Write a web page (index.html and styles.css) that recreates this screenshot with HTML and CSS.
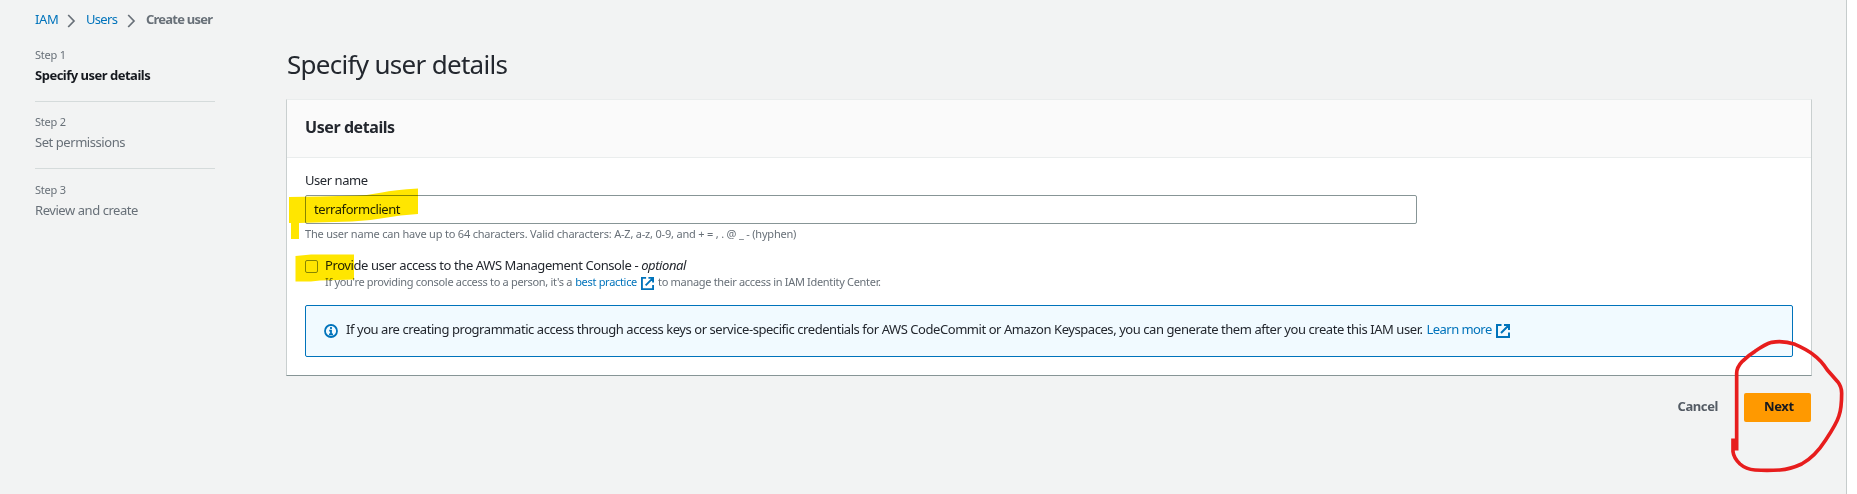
FILE: index.html
```html
<!DOCTYPE html>
<html lang="en">
<head>
<meta charset="utf-8">
<title>Create user | IAM</title>
<link rel="stylesheet" href="styles.css">
</head>
<body>
<div class="page">
  <nav class="breadcrumbs">
    <a class="link crumb-iam" href="#">IAM</a>
    <svg class="chevron" viewBox="0 0 9 14"><path d="M1.2 1 7 7l-5.8 6"/></svg>
    <a class="link crumb-users" href="#">Users</a>
    <svg class="chevron" viewBox="0 0 9 14"><path d="M1.2 1 7 7l-5.8 6"/></svg>
    <span class="crumb-current">Create user</span>
  </nav>
  <div class="layout">
    <ol class="steps">
      <li class="step active"><div class="step-label">Step 1</div><div class="step-title">Specify user details</div></li>
      <li class="step"><div class="step-label">Step 2</div><div class="step-title">Set permissions</div></li>
      <li class="step"><div class="step-label">Step 3</div><div class="step-title">Review and create</div></li>
    </ol>
    <main class="content">
      <h1 class="title">Specify user details</h1>
      <section class="card">
        <header class="card-header"><h2>User details</h2></header>
        <div class="card-body">
          <label class="field-label" for="name">User name</label>
          <input class="field" id="name" type="text" value="terraformclient" spellcheck="false">
          <p class="hint">The user name can have up to 64 characters. Valid characters: A-Z, a-z, 0-9, and + = , . @ _ - (hyphen)</p>
          <div class="check-row">
            <span class="checkbox"></span>
            <div>
              <div class="check-label">Provide user access to the AWS Management Console - <em>optional</em></div>
              <div class="check-hint"><span>If you're providing console access to a person, it's a</span><a class="link practice" href="#">best practice</a><svg class="external small" viewBox="0 0 14 14"><path d="M5.5 1H1v12h12V8.5M8 1h5v5M12.5 1.5 5 9"/></svg><span>to manage their access in IAM Identity Center.</span></div>
            </div>
          </div>
          <div class="alert">
            <svg class="info" viewBox="0 0 14 14"><circle cx="7" cy="7" r="6"/><path d="M7 3v2M5.2 6.6H7v3.2M5 10.3h4"/></svg>
            <span class="alert-text">If you are creating programmatic access through access keys or service-specific credentials for AWS CodeCommit or Amazon Keyspaces, you can generate them after you create this IAM user.</span>
            <a class="link learn" href="#">Learn more</a>
            <svg class="external" viewBox="0 0 14 14"><path d="M5.5 1H1v12h12V8.5M8 1h5v5M12.5 1.5 5 9"/></svg>
          </div>
        </div>
      </section>
      <div class="actions">
        <button class="btn cancel">Cancel</button>
        <button class="btn next">Next</button>
      </div>
    </main>
  </div>
</div>
<svg class="ink highlighter" viewBox="0 0 1857 494">
  <path d="M289 197 320 196.6 357 195.5Q370 195 382 192.500T418 188.500V214Q400 215 384 218T352 221.500L299 223V239H291V223H289Z"/>
  <path d="M295.500 256 311 254.500H354V279.500L320 280.500 311 281.500H295.500Z"/>
</svg>
<svg class="ink pen" viewBox="0 0 1857 494">
  <path transform="translate(1640 290) scale(.33333)" d="M290 476V250Q290 232 307 214Q325 196 345 184Q375 163 395 157Q430 151 465 163Q500 178 520 194Q543 210 562 240L593 275Q605 290 605 310Q605 355 597 377Q590 400 557 450Q525 500 485 522Q450 538 420 540Q380 542 345 540Q318 538 300 522Q281 504 279 485V451"/>
</svg>
</body>
</html>
```
FILE: styles.css
```css
* { box-sizing: border-box; }
body {
  margin: 0;
  height: 494px;
  overflow: hidden;
  background: #fff;
  color: #23272e;
  font: 13px/20px "Noto Sans", sans-serif;
  letter-spacing: -0.44px;
}
h1, h2, p, ol { margin: 0; padding: 0; }
svg { flex: none; fill: none; }
.page {
  width: 1847px;
  height: 494px;
  padding: 9px 34px 0 35px;
  background: #f2f3f3;
  border-right: 1px solid #c6cccc;
}
.link { color: #0073bb; text-decoration: none; }

.breadcrumbs { display: flex; align-items: center; height: 20px; white-space: nowrap; }
.crumb-iam { width: 32px; letter-spacing: -0.3px; }
.crumb-users { width: 31px; margin-left: 10px; letter-spacing: -0.7px; }
.chevron { width: 9px; height: 14px; margin-top: 4px; stroke: #687078; stroke-width: 1.7; }
.crumb-users + .chevron { margin-left: 10px; }
.crumb-current { margin-left: 10px; color: #687078; font-weight: 700; letter-spacing: -0.78px; }

.layout { display: flex; }
.steps { width: 180px; margin: 18px 71px 0 0; list-style: none; }
.step { padding-bottom: 16px; color: #687078; }
.step + .step { padding-top: 12px; border-top: 1px solid #d5dbdb; }
.step:last-child { padding-top: 13px; }
.step-label { margin-bottom: 2px; font-size: 11px; line-height: 16px; letter-spacing: -0.2px; }
.active .step-title { color: #16191f; font-weight: 700; letter-spacing: -0.5px; }

.content { width: 1526px; margin-top: 17px; }
.title { margin-bottom: 17px; padding-left: 1px; font-size: 26px; font-weight: 400; line-height: 36px; letter-spacing: -0.7px; }
.card {
  height: 277px;
  background: #fff;
  border: 1px solid #c9cfcf;
  border-top-color: #eaeded;
  border-bottom-color: #879596;
}
.card-header { height: 58px; padding: 16px 18px 0; background: #fafafa; border-bottom: 1px solid #eaeded; }
.card-header h2 { font-size: 16px; font-weight: 700; line-height: 22px; letter-spacing: -0.42px; }
.card-body { padding: 12px 18px 0 18px; }
.field-label { display: block; margin-bottom: 5px; }
.field {
  display: block;
  width: 1112px;
  height: 29px;
  padding: 0 8px 2px 8px;
  background: #fff;
  border: 1px solid #879596;
  border-radius: 2px;
  color: #23272e;
  font: inherit;
  letter-spacing: -0.44px;
  outline: 0;
}
.hint { margin-top: 2px; color: #687078; font-size: 11px; line-height: 16px; letter-spacing: -0.2px; }
.check-row { display: flex; gap: 7px; margin-top: 14px; }
.checkbox { width: 13px; height: 13px; margin-top: 4px; background: #fff; border: 1px solid #879596; border-radius: 2px; }
.check-label { line-height: 18px; letter-spacing: -0.41px; }
.check-hint { display: flex; color: #687078; font-size: 11px; line-height: 16px; letter-spacing: -0.31px; white-space: pre; }
.practice { margin-left: 3px; }
.external { width: 14px; height: 14px; stroke: #0073bb; stroke-width: 2; }
.external.small { width: 13px; height: 13px; margin: 3px 4px 0 4px; }
.alert {
  display: flex;
  height: 52px;
  margin-top: 15px;
  padding: 13px 18px;
  background: #f1faff;
  border: 1px solid #0073bb;
  border-radius: 2px;
  white-space: nowrap;
}
.info { width: 14px; height: 14px; margin: 5px 8px 0 0; stroke: #0073bb; stroke-width: 1.8; }
.learn { margin: 0 4px 0 4px; letter-spacing: -0.55px; }
.alert .external { margin-top: 5px; }

.actions { display: flex; justify-content: flex-end; gap: 6px; margin: 17px 1px 0 0; }
.btn { height: 29px; padding: 0 20px 4px; border: 0; border-radius: 2px; background: none; color: #545b64; font: 700 13px/20px "Noto Sans", sans-serif; letter-spacing: -0.4px; }
.next { width: 67px; padding-right: 22px; background: #ff9900; color: #16191f; }

/* Freehand annotations drawn over the form */
.ink { position: absolute; left: 0; top: 0; width: 1857px; height: 494px; pointer-events: none; }
.highlighter { fill: #ffe600; mix-blend-mode: multiply; }
.pen { stroke: #e71d1d; stroke-width: 11; stroke-linejoin: round; stroke-linecap: square; }
```
